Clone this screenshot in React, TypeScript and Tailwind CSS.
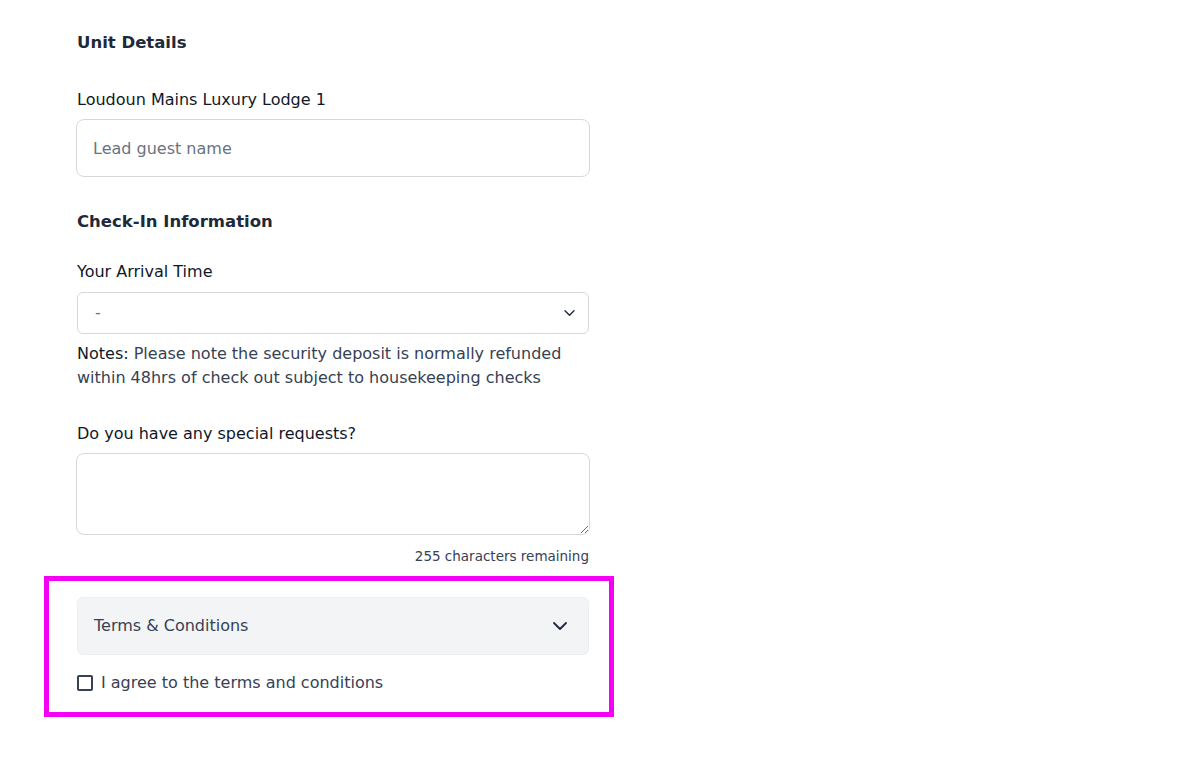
import React from "react";

function Chevron({ className }: { className?: string }) {
  return (
    <svg viewBox="0 0 14 8" className={className} fill="none" aria-hidden="true">
      <path d="M1 1l6 6 6-6" stroke="currentColor" strokeWidth="1.8" strokeLinecap="round" strokeLinejoin="round" />
    </svg>
  );
}

export default function App() {
  return (
    <div className="min-h-[775px] bg-white font-['DejaVu_Sans',sans-serif] text-gray-800">
      <div className="ml-[77px] flex w-[512px] flex-col pt-[29px]">
        <h2 className="text-[16.5px] font-semibold leading-7 text-gray-800">Unit Details</h2>

        <label className="mt-[31px] text-base leading-6 text-gray-900">Loudoun Mains Luxury Lodge 1</label>
        <input
          type="text"
          placeholder="Lead guest name"
          className="-ml-px mt-[7px] h-[58px] w-[514px] rounded-lg border border-[#d6d8dc] bg-white px-4 text-base text-gray-800 outline-none placeholder:text-[#6b7280]"
        />

        <h2 className="mt-[31px] text-[16.5px] font-semibold leading-7 text-gray-800">Check-In Information</h2>

        <label className="mt-6 text-base leading-6 text-gray-900">Your Arrival Time</label>
        <div className="mt-[8px] flex h-[42px] w-full items-center justify-between rounded-md border border-[#d6d8dc] bg-white pl-[17px] pr-[13px]">
          <span className="text-base text-gray-500">-</span>
          <Chevron className="h-[6px] w-[11px] text-gray-800" />
        </div>

        <p className="mt-[8px] text-base leading-6 text-gray-700">
          <span className="text-gray-900">Notes: </span>
          <span>Please note the security deposit is normally refunded within 48hrs of check out subject to housekeeping checks</span>
        </p>

        <label className="mt-8 text-base leading-6 text-gray-900">Do you have any special requests?</label>
        <textarea className="-ml-px mt-[7px] h-[82px] w-[514px] rounded-lg border border-[#d6d8dc] bg-white px-4 py-2 text-base outline-none" />
        <p className="mt-[11px] text-right text-[13.5px] leading-5 text-gray-700">255 characters remaining</p>

        <div className="-ml-[33px] mt-[10px] flex w-[570px] flex-col border-[5px] border-[#f500f5] pb-[19px] pl-[28px] pr-[20px] pt-[16px]">
          <div className="flex h-[58px] items-center justify-between rounded-md border border-[#eceef1] bg-[#f3f4f6] pl-[16px] pr-[21px]">
            <span className="text-base text-gray-700">Terms &amp; Conditions</span>
            <Chevron className="h-[8px] w-[14px] text-gray-800" />
          </div>
          <label className="mt-[18px] flex items-center gap-2">
            <span className="h-4 w-4 rounded-[2px] border-2 border-gray-700 bg-white" />
            <span className="text-base leading-5 text-gray-700">I agree to the terms and conditions</span>
          </label>
        </div>
      </div>
    </div>
  );
}
